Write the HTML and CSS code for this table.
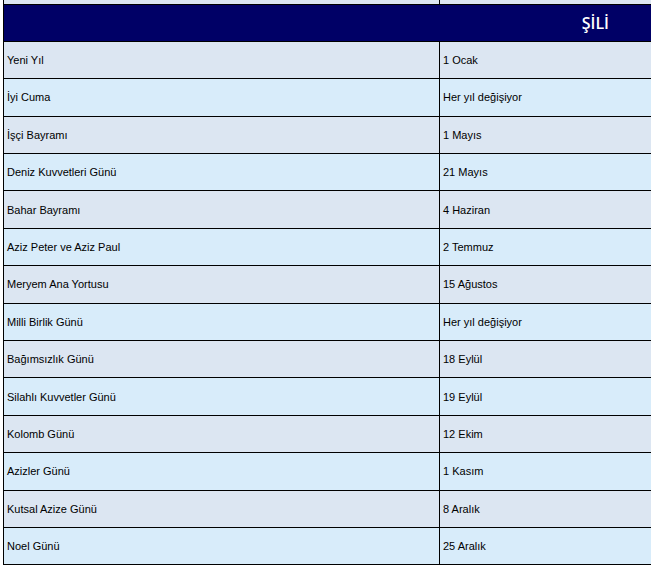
FILE: index.html
```html
<!DOCTYPE html>
<html lang="tr">
<head>
<meta charset="utf-8">
<title>Şili Tatilleri</title>
<link rel="stylesheet" href="styles.css">
</head>
<body>
<table class="holidays">
  <colgroup><col class="c1"><col class="c2"></colgroup>
  <tr class="stub"><td></td><td></td></tr>
  <tr class="head"><th colspan="2">ŞİLİ</th></tr>
  <tr class="a"><td>Yeni Yıl</td><td>1 Ocak</td></tr>
  <tr class="b"><td>İyi Cuma</td><td>Her yıl değişiyor</td></tr>
  <tr class="a"><td>İşçi Bayramı</td><td>1 Mayıs</td></tr>
  <tr class="b"><td>Deniz Kuvvetleri Günü</td><td>21 Mayıs</td></tr>
  <tr class="a"><td>Bahar Bayramı</td><td>4 Haziran</td></tr>
  <tr class="b"><td>Aziz Peter ve Aziz Paul</td><td>2 Temmuz</td></tr>
  <tr class="a"><td>Meryem Ana Yortusu</td><td>15 Ağustos</td></tr>
  <tr class="b"><td>Milli Birlik Günü</td><td>Her yıl değişiyor</td></tr>
  <tr class="a"><td>Bağımsızlık Günü</td><td>18 Eylül</td></tr>
  <tr class="b"><td>Silahlı Kuvvetler Günü</td><td>19 Eylül</td></tr>
  <tr class="a"><td>Kolomb Günü</td><td>12 Ekim</td></tr>
  <tr class="b"><td>Azizler Günü</td><td>1 Kasım</td></tr>
  <tr class="a"><td>Kutsal Azize Günü</td><td>8 Aralık</td></tr>
  <tr class="b"><td>Noel Günü</td><td>25 Aralık</td></tr>
</table>
</body>
</html>
```
FILE: styles.css
```css
html, body {
  margin: 0;
  padding: 0;
  overflow: hidden;
  background: #ffffff;
}
body {
  padding-left: 3px;
}
.holidays {
  border-collapse: collapse;
  width: 648px;
  font-family: "Liberation Sans", Arial, sans-serif;
  font-size: 11px;
  color: #000;
  table-layout: fixed;
}
.c1 { width: 436px; }
.holidays td {
  border: 1px solid #000;
  padding: 0 0 0 3px;
  vertical-align: middle;
}
.holidays td:last-child,
.holidays th {
  border-right: none;
}
.holidays tr {
  height: 37.4px;
}
.holidays tr.stub { height: 4px; }
.holidays tr.stub td {
  border-top: none;
  background: #dce6f2;
  padding: 0;
  height: 3px;
  line-height: 0;
}
.holidays tr.head th {
  background: #000066;
  color: #ffffff;
  font-family: "Open Sans", "DejaVu Sans", sans-serif;
  font-weight: 600;
  font-size: 16px;
  text-align: right;
  padding: 0 42px 0 0;
  border-top: 1px solid #000;
  border-bottom: 1px solid #000;
  border-left: 1px solid #000;
}
.holidays tr.a td { background: #dce6f2; }
.holidays tr.b td { background: #d8ecfa; }
```
